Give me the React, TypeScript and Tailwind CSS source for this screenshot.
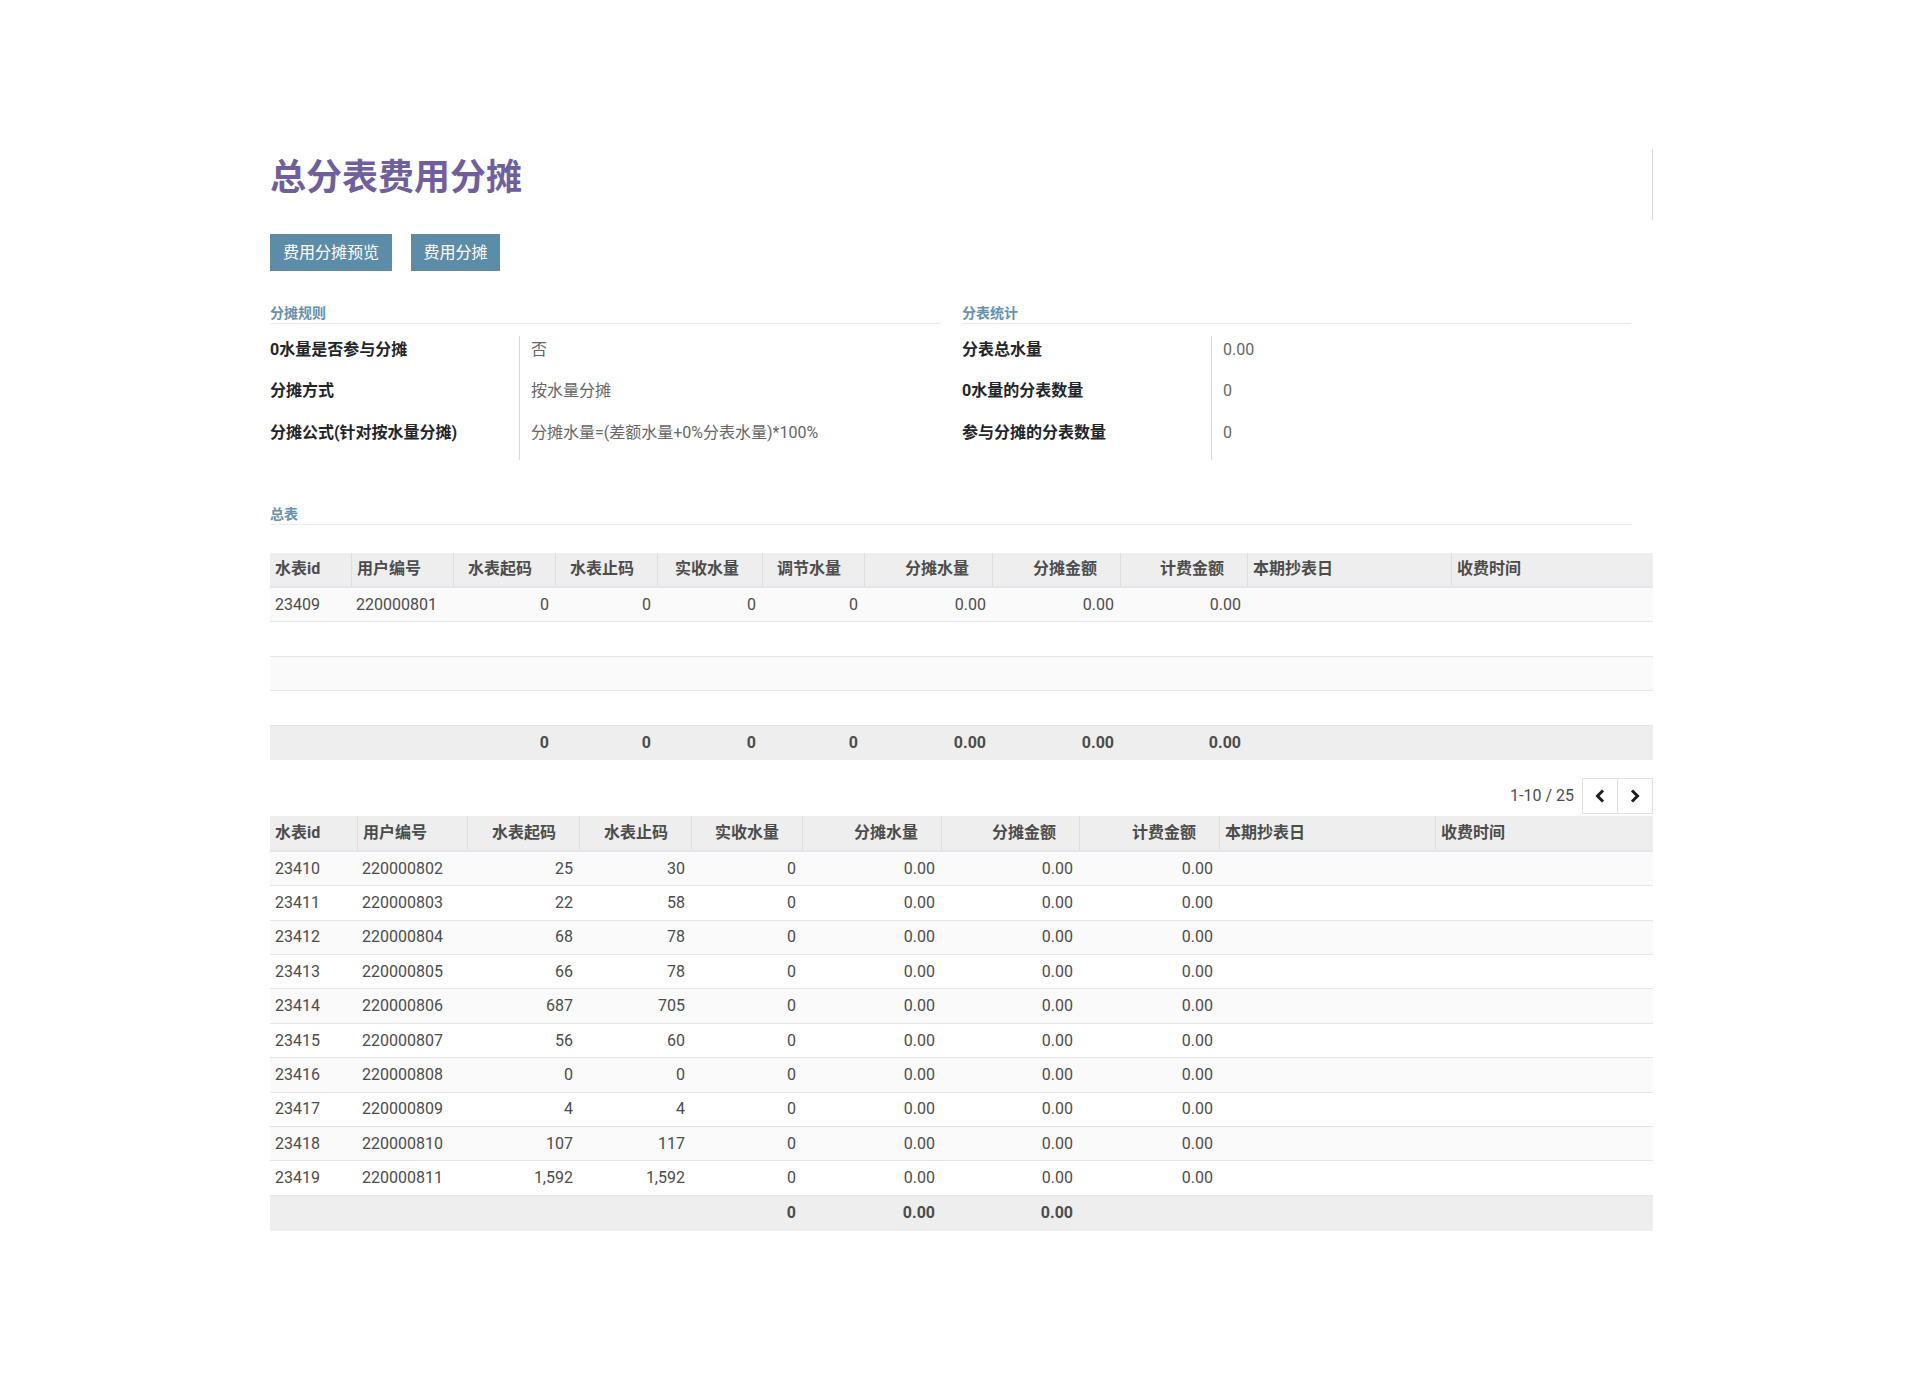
import React from "react";

type Col = { label: string; w: number; right?: boolean };

const mainCols: Col[] = [
  { label: "水表id", w: 81 },
  { label: "用户编号", w: 102 },
  { label: "水表起码", w: 102, right: true },
  { label: "水表止码", w: 102, right: true },
  { label: "实收水量", w: 105, right: true },
  { label: "调节水量", w: 102, right: true },
  { label: "分摊水量", w: 128, right: true },
  { label: "分摊金额", w: 128, right: true },
  { label: "计费金额", w: 127, right: true },
  { label: "本期抄表日", w: 204 },
  { label: "收费时间", w: 202 },
];

const subCols: Col[] = [
  { label: "水表id", w: 87 },
  { label: "用户编号", w: 110 },
  { label: "水表起码", w: 112, right: true },
  { label: "水表止码", w: 112, right: true },
  { label: "实收水量", w: 111, right: true },
  { label: "分摊水量", w: 139, right: true },
  { label: "分摊金额", w: 138, right: true },
  { label: "计费金额", w: 140, right: true },
  { label: "本期抄表日", w: 216 },
  { label: "收费时间", w: 218 },
];

const subRows: string[][] = [
  ["23410", "220000802", "25", "30"],
  ["23411", "220000803", "22", "58"],
  ["23412", "220000804", "68", "78"],
  ["23413", "220000805", "66", "78"],
  ["23414", "220000806", "687", "705"],
  ["23415", "220000807", "56", "60"],
  ["23416", "220000808", "0", "0"],
  ["23417", "220000809", "4", "4"],
  ["23418", "220000810", "107", "117"],
  ["23419", "220000811", "1,592", "1,592"],
].map((r) => [...r, "0", "0.00", "0.00", "0.00", "", ""]);

function DataTable({
  cols,
  rows,
  footer,
  headH,
  rowH,
  footH,
}: {
  cols: Col[];
  rows: string[][];
  footer: string[];
  headH: string;
  rowH: string;
  footH: string;
}) {
  return (
    <div className="w-full text-[16px] text-[#4c4c4c]">
      <div className={`flex bg-[#eeeeee] border-b-2 border-[#e3e6ea] font-bold ${headH}`}>
        {cols.map((c, i) => (
          <div
            key={c.label}
            style={{ width: c.w }}
            className={`flex items-center shrink-0 ${i > 0 ? "border-l border-[#dddddd]" : ""} ${
              c.right ? "justify-end pr-[23px]" : "pl-[5px]"
            }`}
          >
            {c.label}
          </div>
        ))}
      </div>
      {rows.map((r, ri) => (
        <div
          key={ri}
          className={`flex border-b border-[#e6e6e6] ${rowH} ${ri % 2 === 0 ? "bg-[#fafafa]" : "bg-white"}`}
        >
          {cols.map((c, i) => (
            <div
              key={c.label}
              style={{ width: c.w }}
              className={`flex items-center shrink-0 ${c.right ? "justify-end pr-[6px]" : "pl-[5px]"}`}
            >
              {r[i] ?? ""}
            </div>
          ))}
        </div>
      ))}
      <div className={`flex bg-[#eeeeee] font-bold ${footH}`}>
        {cols.map((c, i) => (
          <div
            key={c.label}
            style={{ width: c.w }}
            className={`flex items-center shrink-0 ${c.right ? "justify-end pr-[6px]" : "pl-[5px]"}`}
          >
            {footer[i] ?? ""}
          </div>
        ))}
      </div>
    </div>
  );
}

function SectionTitle({ children }: { children: React.ReactNode }) {
  return (
    <div className="h-[21px] leading-[20px] border-b border-[#ececec] text-[14px] font-semibold text-[#6592ae]">
      {children}
    </div>
  );
}

function FieldGroup({ title, items }: { title: string; items: [string, string][] }) {
  return (
    <div className="pr-[22px]">
      <SectionTitle>{title}</SectionTitle>
      <div className="mt-[12px] flex">
        <div className="w-[249px] shrink-0">
          {items.map(([k]) => (
            <div key={k} className="h-[41.3px] pt-[2px] leading-[24px] font-bold text-[#212529]">
              {k}
            </div>
          ))}
        </div>
        <div className="border-l border-[#d9d9d9] pl-[11px]">
          {items.map(([k, v]) => (
            <div key={k} className="h-[41.3px] pt-[2px] leading-[24px] text-[#666666]">
              {v}
            </div>
          ))}
        </div>
      </div>
    </div>
  );
}

function Chevron({ left }: { left?: boolean }) {
  return (
    <svg width="10" height="14" viewBox="0 0 10 14">
      <polyline
        points={left ? "8,1.5 2.5,7 8,12.5" : "2,1.5 7.5,7 2,12.5"}
        fill="none"
        stroke="#1e1e1e"
        strokeWidth="3"
      />
    </svg>
  );
}

export default function App() {
  return (
    <div className="min-h-[1395px] bg-white font-['Roboto','Noto_Sans_CJK_SC',sans-serif] text-[16px]">
      <div className="ml-[270px] w-[1383px] pt-[149px]">
        <div className="h-[71px] border-r border-[#dddddd] pt-[8px]">
          <h1 className="text-[36px] leading-[43px] font-bold text-[#705f9e]">总分表费用分摊</h1>
        </div>

        <div className="mt-[14px] flex gap-[19px]">
          <button className="h-[37px] w-[122px] bg-[#5d8ca9] text-white text-[16px]">费用分摊预览</button>
          <button className="h-[37px] w-[89px] bg-[#5d8ca9] text-white text-[16px]">费用分摊</button>
        </div>

        <div className="mt-[32px] grid grid-cols-[692px_691px]">
          <FieldGroup
            title="分摊规则"
            items={[
              ["0水量是否参与分摊", "否"],
              ["分摊方式", "按水量分摊"],
              ["分摊公式(针对按水量分摊)", "分摊水量=(差额水量+0%分表水量)*100%"],
            ]}
          />
          <FieldGroup
            title="分表统计"
            items={[
              ["分表总水量", "0.00"],
              ["0水量的分表数量", "0"],
              ["参与分摊的分表数量", "0"],
            ]}
          />
        </div>

        <div className="mt-[44px] pr-[21px]">
          <SectionTitle>总表</SectionTitle>
        </div>

        <div className="mt-[28px]">
          <DataTable
            cols={mainCols}
            rows={[
              ["23409", "220000801", "0", "0", "0", "0", "0.00", "0.00", "0.00", "", ""],
              [],
              [],
              [],
            ]}
            footer={["", "", "0", "0", "0", "0", "0.00", "0.00", "0.00", "", ""]}
            headH="h-[35px]"
            rowH="h-[34.5px]"
            footH="h-[34px]"
          />
        </div>

        <div className="mt-[18px] flex h-[36px] items-center justify-end">
          <span className="mr-[8px] text-[#4c4c4c]">1-10 / 25</span>
          <button className="flex h-[36px] w-[36px] items-center justify-center border border-[#dee2e6] bg-white">
            <Chevron left />
          </button>
          <button className="-ml-px flex h-[36px] w-[36px] items-center justify-center border border-[#dee2e6] bg-white">
            <Chevron />
          </button>
        </div>

        <div className="mt-[2px]">
          <DataTable
            cols={subCols}
            rows={subRows}
            footer={["", "", "", "", "0", "0.00", "0.00", "", "", ""]}
            headH="h-[36px]"
            rowH="h-[34.4px]"
            footH="h-[35px]"
          />
        </div>
      </div>
    </div>
  );
}
